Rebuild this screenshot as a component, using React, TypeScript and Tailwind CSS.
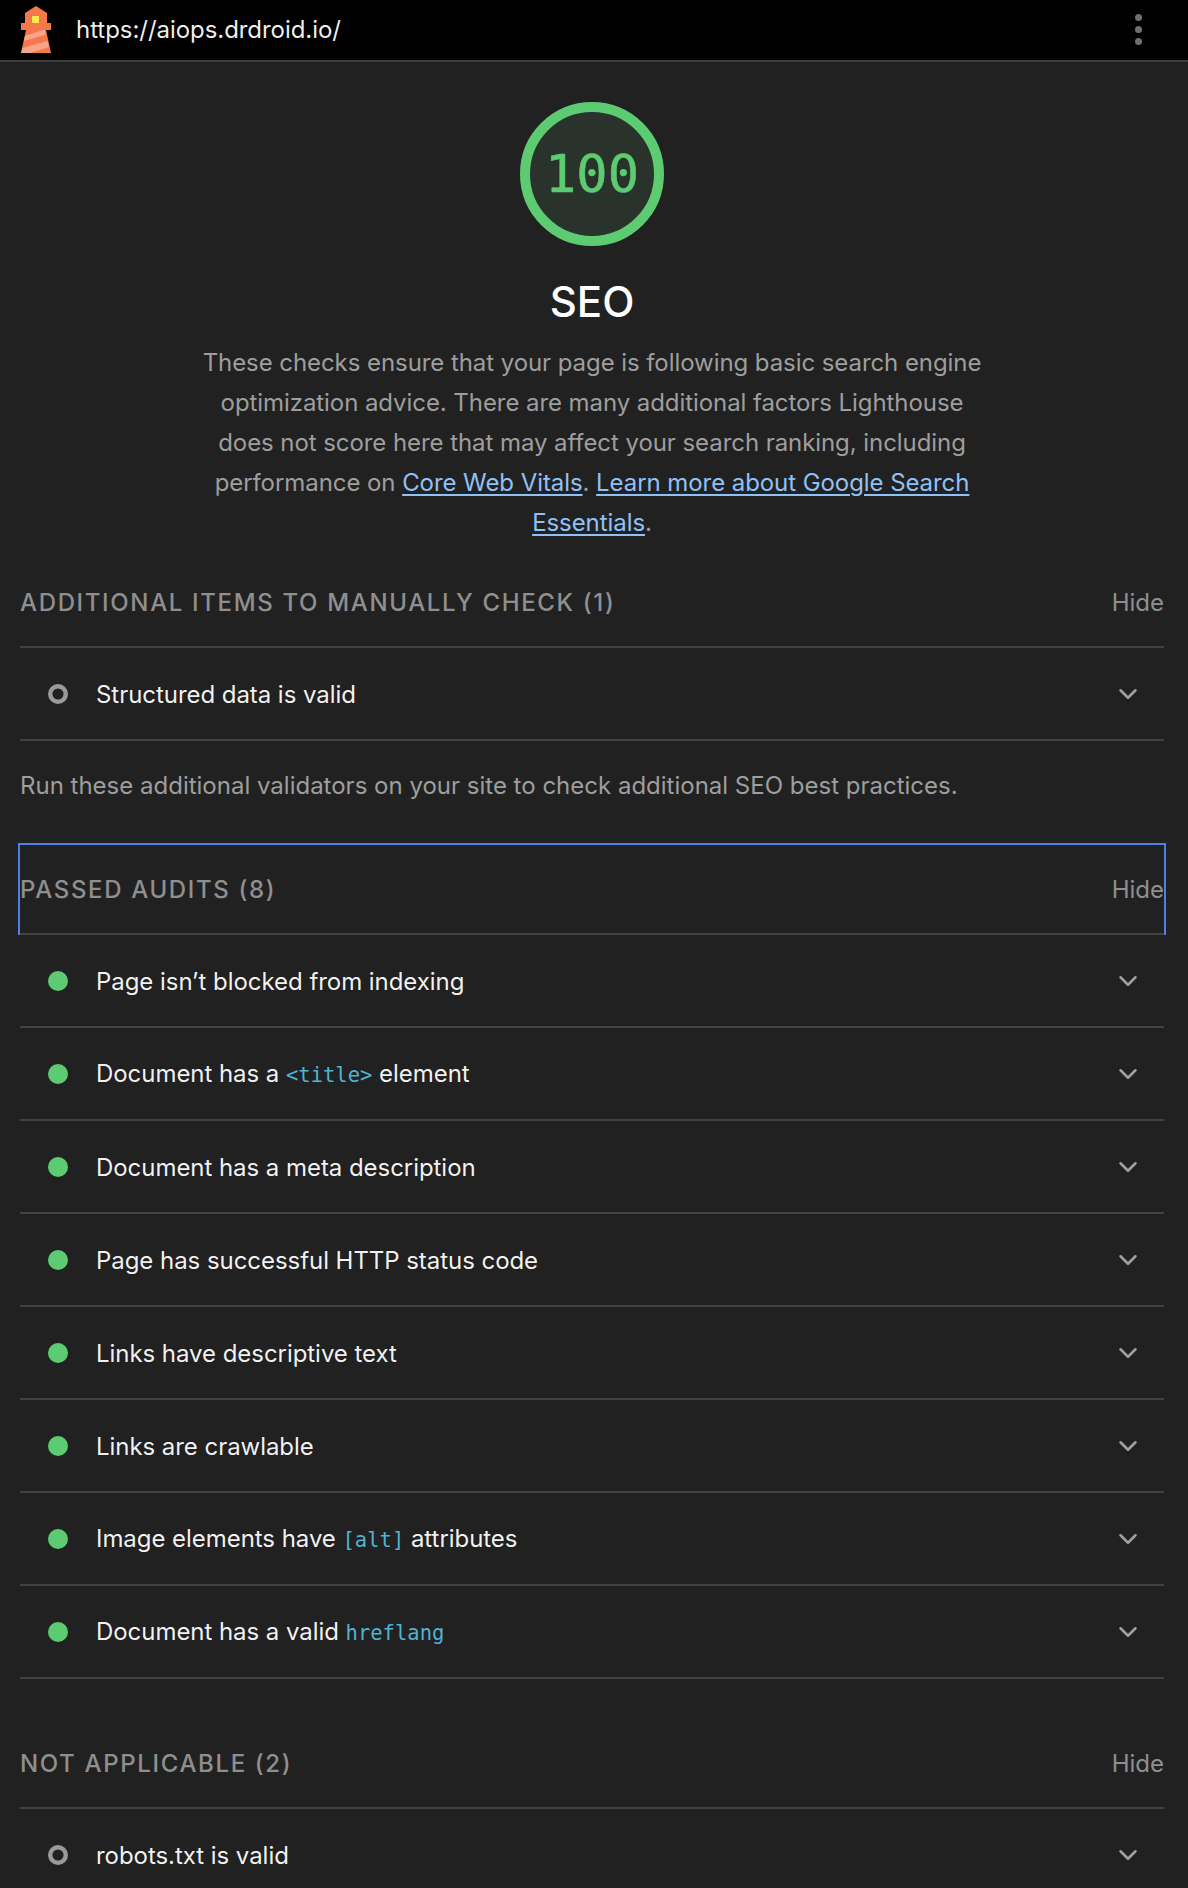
import React from "react";
import { ChevronDown } from "lucide-react";

type Status = "pass" | "na";

interface AuditProps {
  status: Status;
  children: React.ReactNode;
}

const Code = ({ children }: { children: React.ReactNode }) => (
  <code className="font-['DejaVu_Sans_Mono',monospace] text-[20.5px] tracking-normal text-[#4fb4d0]">
    {children}
  </code>
);

const Audit = ({ status, children }: AuditProps) => (
  <div className="flex h-[93px] items-center border-b-2 border-[#424242] pl-[28px] pr-[21px]">
    {status === "pass" ? (
      <span className="h-5 w-5 shrink-0 rounded-full bg-[#5ccb72]" />
    ) : (
      <svg width="20" height="20" viewBox="0 0 20 20" className="shrink-0">
        <circle cx="10" cy="10" r="7.8" fill="none" stroke="#9a9a9a" strokeWidth="4.4" />
      </svg>
    )}
    <span className="ml-[28px] flex-1 whitespace-pre pt-[2px] tracking-[-0.05px] text-white/95">
      {children}
    </span>
    <ChevronDown className="h-[30px] w-[30px] text-[#a0a0a0]" strokeWidth={2} />
  </div>
);

const GroupTitle = ({ title }: { title: string }) => (
  <>
    <span className="pt-[2px] font-medium tracking-[1.65px] text-[#8f8f8f]">{title}</span>
    <span className="pt-[2px] text-[#8f8f8f]">Hide</span>
  </>
);

const GroupHeader = ({ title }: { title: string }) => (
  <div className="flex h-[91px] items-center justify-between border-b-2 border-[#424242]">
    <GroupTitle title={title} />
  </div>
);

const Logo = () => (
  <svg width="36" height="48" viewBox="0 0 36 48" className="shrink-0">
    <path d="M7 7 L18 0 L29 7 V17 H7 Z" fill="#f4784a" />
    <rect x="14" y="10" width="7" height="7" fill="#ffe84f" />
    <rect x="3" y="17" width="30" height="7" fill="#f4784a" />
    <path d="M8 24 H28 L33 47 H3 Z" fill="#f4784a" />
    <path d="M7 30 L25 24 L27 24 L28 28.5 L6 35 Z" fill="#f5a58a" />
    <path d="M4.5 42 L29.5 35 L31 41 L12 47 L3 47 Z" fill="#f5a58a" />
  </svg>
);

export default function App() {
  return (
    <div className="h-[1888px] overflow-hidden bg-[#212121] font-['Inter',sans-serif] text-[24px] leading-[40px]">
      <header className="flex h-[62px] items-center border-b-2 border-[#3c3c3c] bg-black pl-[18px] pr-[46px]">
        <Logo />
        <span className="ml-[22px] flex-1 tracking-[-0.05px] text-white/95">
          https://aiops.drdroid.io/
        </span>
        <div className="-mt-[2px] flex flex-col gap-[5px]">
          <span className="h-[7px] w-[7px] rounded-full bg-[#707070]" />
          <span className="h-[7px] w-[7px] rounded-full bg-[#707070]" />
          <span className="h-[7px] w-[7px] rounded-full bg-[#707070]" />
        </div>
      </header>

      <div className="w-[1184px]">
        <section className="flex flex-col items-center pt-[40px]">
          <div className="flex h-[144px] w-[144px] items-center justify-center rounded-full border-[10px] border-[#5ccb72] bg-[#2a332b] font-['DejaVu_Sans_Mono',monospace] text-[52px] text-[#5ccb72] [-webkit-text-stroke:0.6px_#5ccb72]">
            100
          </div>
          <h1 className="mt-[26px] text-[42px] font-medium leading-[60px] text-white">SEO</h1>
          <p className="mt-[11px] max-w-[790px] text-center tracking-[-0.07px] text-[#9e9e9e]">
            These checks ensure that your page is following basic search engine optimization
            advice. There are many additional factors Lighthouse does not score here that may
            affect your search ranking, including performance on{" "}
            <a className="text-[#8fc1f7] underline decoration-2 underline-offset-[3px]">
              Core Web Vitals
            </a>
            .{" "}
            <a className="text-[#8fc1f7] underline decoration-2 underline-offset-[3px]">
              Learn more about Google Search
            </a>{" "}
            <a className="text-[#8fc1f7] underline decoration-2 underline-offset-[3px]">
              Essentials
            </a>
            .
          </p>
        </section>

        <main className="px-[20px] pt-[14px]">
          <GroupHeader title="ADDITIONAL ITEMS TO MANUALLY CHECK (1)" />
          <Audit status="na">Structured data is valid</Audit>
          <p className="mt-[25px] text-[#9e9e9e]">
            Run these additional validators on your site to check additional SEO best practices.
          </p>

          {/* focus ring is cut off at the bottom by the group's own divider */}
          <div className="-mx-[2px] mt-[37px] border-x-2 border-t-2 border-[#4d7fe8]">
            <div className="flex h-[90px] items-center justify-between border-b-2 border-[#424242]">
              <GroupTitle title="PASSED AUDITS (8)" />
            </div>
          </div>
          <Audit status="pass">Page isn’t blocked from indexing</Audit>
          <Audit status="pass">
            Document has a <Code>&lt;title&gt;</Code> element
          </Audit>
          <Audit status="pass">Document has a meta description</Audit>
          <Audit status="pass">Page has successful HTTP status code</Audit>
          <Audit status="pass">Links have descriptive text</Audit>
          <Audit status="pass">Links are crawlable</Audit>
          <Audit status="pass">
            Image elements have <Code>[alt]</Code> attributes
          </Audit>
          <Audit status="pass">
            Document has a valid <Code>hreflang</Code>
          </Audit>

          <div className="mt-[39px]">
            <GroupHeader title="NOT APPLICABLE (2)" />
          </div>
          <Audit status="na">robots.txt is valid</Audit>
        </main>
      </div>
    </div>
  );
}
